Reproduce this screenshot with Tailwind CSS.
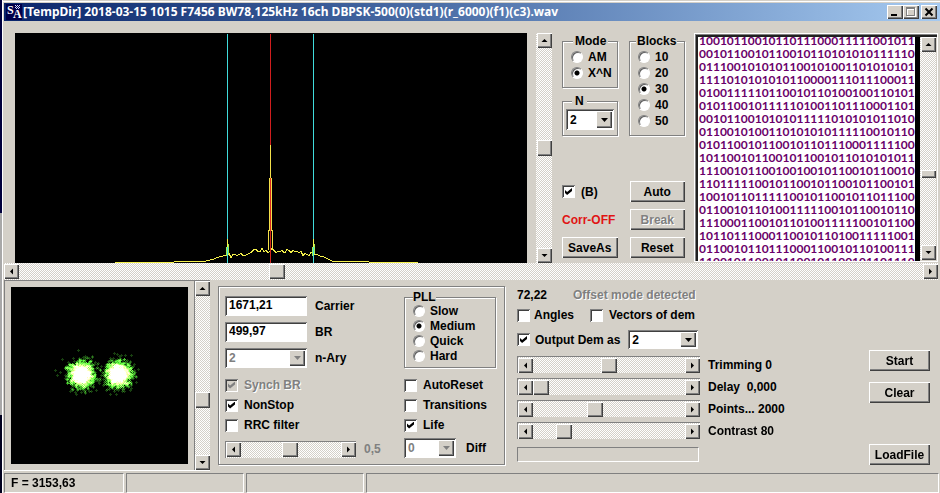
<!DOCTYPE html>
<html lang="en">
<head>
    <meta charset="UTF-8">
    <meta name="viewport" content="width=device-width, initial-scale=1.0">
    <title>Signal Analyzer</title>
    <script src="https://cdn.jsdelivr.net/npm/@tailwindcss/browser@4"></script>
</head>
<body class="flex min-h-screen bg-[#d4d0c8] font-['Liberation_Sans',Arial,sans-serif] text-[12px] leading-4 font-bold text-black">
    <!-- Desktop edge -->
    <div class="w-[2px] shrink-0 flex flex-col">
        <div class="h-[213px] bg-[#00003c]"></div>
        <div class="h-[202px] bg-[#a8a8a8]"></div>
        <div class="flex-1 bg-[#00001e]"></div>
    </div>

    <div class="flex-1 min-w-0 flex flex-col border-l border-white">
        <!-- Title bar -->
        <header class="mt-px border-t border-white pt-px pl-px">
            <div class="flex items-center h-[18px] pl-[2px] pr-[3px] bg-linear-to-r from-[#0a246a] to-[#a6caf0]">
                <svg class="w-4 h-4 shrink-0" viewBox="0 0 16 16">
                    <rect width="16" height="16" fill="#00004a"/>
                    <text x="1" y="10" font-family="Liberation Serif, serif" font-size="12" font-weight="bold" fill="#fff">S</text>
                    <text x="7" y="14" font-family="Liberation Serif, serif" font-size="12" font-weight="bold" fill="#fff">A</text>
                    <path d="M9 1h1M11 1h1M13 1h1M10 2h1M12 2h1M9 3h1M11 3h1M13 3h1M10 4h1M12 4h1" transform="translate(0 .5)" stroke="#cfd6ff"/>
                </svg>
                <h1 class="flex-1 min-w-0 pl-px truncate font-['Noto_Sans','Open_Sans',sans-serif] text-[12px] font-bold text-white">[TempDir] 2018-03-15 1015 F7456 BW78,125kHz 16ch DBPSK-500(0)(std1)(r_6000)(f1)(c3).wav</h1>
                <div class="flex">
                    <button type="button" aria-label="Minimize" class="flex w-4 h-[14px] bg-[#d4d0c8] shadow-[inset_1px_1px_#fff,inset_-1px_-1px_#404040,inset_-2px_-2px_#808080]">
                        <svg class="w-4 h-[14px]" viewBox="0 0 16 14"><path d="M4 9h6v2H4z"/></svg>
                    </button>
                    <button type="button" aria-label="Maximize" disabled class="flex w-4 h-[14px] bg-[#d4d0c8] shadow-[inset_1px_1px_#fff,inset_-1px_-1px_#404040,inset_-2px_-2px_#808080]">
                        <svg class="w-4 h-[14px]" viewBox="0 0 16 14" fill="none" shape-rendering="crispEdges"><path d="M4.5 4.5h8v7h-8zM4 3.5h9" stroke="#fff"/><path d="M3.500 3.500h8v7h-8zM3 2.500h9" stroke="#808080"/></svg>
                    </button>
                    <button type="button" aria-label="Close" class="ml-[2px] flex w-4 h-[14px] bg-[#d4d0c8] shadow-[inset_1px_1px_#fff,inset_-1px_-1px_#404040,inset_-2px_-2px_#808080]">
                        <svg class="w-4 h-[14px]" viewBox="0 0 16 14"><path d="M4.500 3.500l7 7M11.500 3.500l-7 7" stroke="#000" stroke-width="2"/></svg>
                    </button>
                </div>
            </div>
        </header>

        <!-- Spectrum, mode controls and bit stream -->
        <section class="flex pt-3 pl-3 pr-[2px]">
            <svg class="flex-1 min-w-0 h-[230px] bg-black" viewBox="0 0 512 230" preserveAspectRatio="none" fill="none" shape-rendering="crispEdges">
                <path d="M255.500 1V230" stroke="#d01e1e"/>
                <path id="spectrum" stroke="#f4f04a"/>
                <path d="M253.500 217V197h1V145h1V112V145h1V197h1V217" stroke="#f4e04a"/>
                <path d="M255.500 145V230" stroke="#d8281e"/>
                <path d="M212.500 1V230M298.500 1V230" stroke="#40dcdc"/>
                <path d="M212.500 206V214M298.500 206V214" stroke="#f4f04a"/>
                <path d="M211.500 214V223M213.500 211V221M297.500 214V223M299.500 211V221" stroke="#a0f050"/>
            </svg>
            <div data-bar="v" data-id="level" data-label="Level" data-value="50" class="ml-[9px] w-4"></div>

            <div class="ml-[10px] w-[123px] flex flex-col justify-between pb-[5px]">
                <div class="flex gap-[11px]">
                    <div class="w-14 flex flex-col justify-between">
                        <fieldset class="h-[55px] border border-[#808080] shadow-[1px_1px_#fff,inset_1px_1px_#fff] pl-2">
                            <legend class="ml-[2px] px-[2px] bg-[#d4d0c8]">Mode</legend>
                            <label class="flex items-center gap-[5px] h-4"><input type="radio" name="mode">AM</label>
                            <label class="flex items-center gap-[5px] h-4"><input type="radio" name="mode" checked>X^N</label>
                        </fieldset>
                        <fieldset class="h-[43px] border border-[#808080] shadow-[1px_1px_#fff,inset_1px_1px_#fff] px-[3px]">
                            <legend class="ml-[6px] px-[3px] bg-[#d4d0c8]">N</legend>
                            <div data-select class="h-[21px]"><select aria-label="N"><option>2</option><option>4</option></select></div>
                        </fieldset>
                    </div>
                    <fieldset class="w-14 h-[103px] border border-[#808080] shadow-[1px_1px_#fff,inset_1px_1px_#fff] pl-2">
                        <legend class="-ml-[2px] px-px bg-[#d4d0c8]">Blocks</legend>
                        <label class="flex items-center gap-[5px] h-4"><input type="radio" name="blocks">10</label>
                        <label class="flex items-center gap-[5px] h-4"><input type="radio" name="blocks">20</label>
                        <label class="flex items-center gap-[5px] h-4"><input type="radio" name="blocks" checked>30</label>
                        <label class="flex items-center gap-[5px] h-4"><input type="radio" name="blocks">40</label>
                        <label class="flex items-center gap-[5px] h-4"><input type="radio" name="blocks">50</label>
                    </fieldset>
                </div>
                <div class="grid grid-cols-2 gap-x-3 gap-y-[7px] items-center">
                    <label class="flex items-center gap-[6px]"><input type="checkbox" checked>(B)</label>
                    <button type="button" data-btn>Auto</button>
                    <span class="text-[#e01414]">Corr-OFF</span>
                    <button type="button" data-btn disabled>Break</button>
                    <button type="button" data-btn>SaveAs</button>
                    <button type="button" data-btn>Reset</button>
                </div>
            </div>

            <!-- Bit stream -->
            <div class="ml-[9px] w-[244px] h-[229px] flex border border-white p-px shadow-[inset_1px_1px_#808080,inset_3px_3px_#202020]">
                <div class="flex-1 min-w-0 mt-[2px] ml-[2px] pl-px h-[224px] overflow-hidden bg-white border-r-[5px] border-black">
                    <pre class="-mt-[3px] font-[Lato,sans-serif] text-[12px] leading-[13px] font-bold text-[#6a006a]">1001011001011011100011111001011
0010110010110010110101010111110
0111001010101100101001101010101
1111010101010110000111011100011
0100111110110010110100100110101
0101100101111101001101110001101
0010110010101011111010101011010
0110010100110101010111110010110
0101100101100101101110001111100
1011001011001011001011010101011
1110010110010010010110010110010
1101111100101100101100101100101
1001011011111001011001011011100
0110010110100111110010110010110
1110001100101101001111100101100
1011011100011001011010011111001
0110010110111000110010110100111
1100101100101100101100101101110</pre>
                </div>
                <div data-bar="v" data-id="stream" data-label="Bit stream position" data-value="64" data-thumb="small" class="w-4 mt-[2px]"></div>
            </div>
        </section>

        <div data-bar="h" data-id="freq" data-label="Frequency" data-value="28.2" class="h-[17px] ml-px mr-[2px]"></div>

        <!-- Lower panels -->
        <section class="flex pl-px">
            <div class="flex border-t border-[#808080] border-b border-b-white">
                <div class="border-l border-[#808080] p-[6px]">
                    <canvas id="constellation" width="177" height="177" class="block bg-black"></canvas>
                </div>
                <div data-bar="v" data-id="scale" data-label="Scale" data-value="67" class="w-4 border-l border-[#808080]"></div>
            </div>

            <div class="ml-2 mt-[6px] mb-[6px] w-[287px] border border-[#808080] shadow-[1px_1px_#fff,inset_1px_1px_#fff] pl-[6px] pr-2 pt-[2px] grid grid-cols-[179px_1fr] grid-rows-[83px_20px_20px_20px_1fr]">
                <div class="pt-[7px] flex flex-col gap-[6px]">
                    <div class="flex items-center gap-2"><input id="carrier" type="text" data-text value="1671,21"><label for="carrier">Carrier</label></div>
                    <div class="flex items-center gap-2"><input id="br" type="text" data-text value="499,97"><label for="br">BR</label></div>
                    <div class="flex items-center gap-2"><div data-select class="w-[82px] h-5"><select id="nary" disabled><option>2</option></select></div><label for="nary">n-Ary</label></div>
                </div>
                <fieldset class="h-[79px] border border-[#808080] shadow-[1px_1px_#fff,inset_1px_1px_#fff] pl-2">
                    <legend class="ml-0 -mb-[2px] bg-[#d4d0c8]">PLL</legend>
                    <label class="flex items-center gap-[5px] h-[15px]"><input type="radio" name="pll">Slow</label>
                    <label class="flex items-center gap-[5px] h-[15px]"><input type="radio" name="pll" checked>Medium</label>
                    <label class="flex items-center gap-[5px] h-[15px]"><input type="radio" name="pll">Quick</label>
                    <label class="flex items-center gap-[5px] h-[15px]"><input type="radio" name="pll">Hard</label>
                </fieldset>
                <label class="mt-[6px] flex items-center gap-[6px] text-[#808080] [text-shadow:1px_1px_#fff]"><input type="checkbox" checked disabled>Synch BR</label>
                <label class="mt-[6px] flex items-center gap-[6px]"><input type="checkbox">AutoReset</label>
                <label class="mt-[6px] flex items-center gap-[6px]"><input type="checkbox" checked>NonStop</label>
                <label class="mt-[6px] flex items-center gap-[6px]"><input type="checkbox">Transitions</label>
                <label class="mt-[6px] flex items-center gap-[6px]"><input type="checkbox">RRC filter</label>
                <label class="mt-[6px] flex items-center gap-[6px]"><input type="checkbox" checked>Life</label>
                <div class="flex items-center gap-2 pt-[2px]">
                    <div data-bar="h" data-id="rolloff" data-value="49" class="w-[131px] h-[17px] border-t border-l border-[#808080]"></div>
                    <label for="rolloff" class="text-[#808080]">0,5</label>
                </div>
                <div class="flex items-center gap-[10px]">
                    <div data-select class="w-[52px] h-5"><select id="diff" disabled><option>0</option></select></div>
                    <label for="diff">Diff</label>
                </div>
            </div>

            <!-- Demodulator output -->
            <div class="flex-1 min-w-0 ml-3 pt-[7px]">
                <div class="flex h-4"><span class="w-14">72,22</span><span class="text-[#808080] [text-shadow:1px_1px_#fff]">Offset mode detected</span></div>
                <div class="mt-1 flex h-4">
                    <label class="w-[73px] flex items-center gap-1"><input type="checkbox">Angles</label>
                    <label class="flex items-center gap-[6px]"><input type="checkbox">Vectors of dem</label>
                </div>
                <div class="mt-[7px] mb-[7px] flex items-center gap-2">
                    <label class="flex items-center gap-[5px]"><input type="checkbox" checked>Output Dem as</label>
                    <div data-select class="w-[70px] h-[19px]"><select aria-label="Output Dem as"><option>2</option><option>4</option></select></div>
                </div>
                <div class="flex flex-col gap-[5px]">
                    <div class="flex items-center gap-2 h-[17px]"><div data-bar="h" data-id="trimming" data-value="50" class="w-[183px] h-[17px] border-t border-l border-[#808080]"></div><label for="trimming">Trimming 0</label></div>
                    <div class="flex items-center gap-2 h-[17px]"><div data-bar="h" data-id="delay" data-value="0" class="w-[183px] h-[17px] border-t border-l border-[#808080]"></div><label for="delay" class="whitespace-pre">Delay  0,000</label></div>
                    <div class="flex items-center gap-2 h-[17px]"><div data-bar="h" data-id="points" data-value="40" class="w-[183px] h-[17px] border-t border-l border-[#808080]"></div><label for="points">Points... 2000</label></div>
                    <div class="flex items-center gap-2 h-[17px]"><div data-bar="h" data-id="contrast" data-value="17" class="w-[183px] h-[17px] border-t border-l border-[#808080]"></div><label for="contrast">Contrast 80</label></div>
                </div>
                <div role="progressbar" aria-label="Progress" class="mt-2 w-[182px] h-[15px] border border-[#808080] border-b-white border-r-white"></div>
            </div>
            <div class="w-[61px] mr-[10px] pt-[70px] pb-[6px] flex flex-col">
                <button type="button" data-btn>Start</button>
                <button type="button" data-btn class="mt-[11px]">Clear</button>
                <button type="button" data-btn class="mt-auto">LoadFile</button>
            </div>
        </section>

        <!-- Status bar -->
        <footer class="mt-[2px] mb-px ml-px mr-px h-5 flex gap-[2px]">
            <div class="w-[120px] pl-[6px] border border-[#808080] border-b-white border-r-white leading-[18px]">F = 3153,63</div>
            <div class="w-[118px] border border-[#808080] border-b-white border-r-white"></div>
            <div class="w-[118px] border border-[#808080] border-b-white border-r-white"></div>
            <div class="flex-1 border border-[#808080] border-b-white border-r-white"></div>
        </footer>
    </div>

    <script>
        // Shared look of the classic controls
        document.querySelectorAll('[data-btn]').forEach(el => {
            el.className += ' h-[21px] w-full text-center bg-[#d4d0c8] shadow-[inset_1px_1px_#fff,inset_-1px_-1px_#404040,inset_-2px_-2px_#808080] disabled:text-[#808080] disabled:[text-shadow:1px_1px_#fff]';
        });
        document.querySelectorAll('input[type=radio]').forEach(el => {
            el.className = 'appearance-none shrink-0 w-3 h-3 rounded-full bg-white border border-[#808080] border-b-white border-r-white shadow-[inset_1px_1px_#606060] checked:bg-[radial-gradient(circle,#000_0_2px,#fff_3px)]';
        });
        document.querySelectorAll('input[type=checkbox]').forEach(el => {
            const tick = el.disabled ? 'checked:before:bg-[#808080]' : 'checked:before:bg-black';
            el.className = `appearance-none shrink-0 flex w-[13px] h-[13px] p-[3px] bg-white disabled:bg-[#d4d0c8] shadow-[inset_1px_1px_#808080,inset_-1px_-1px_#fff,inset_2px_2px_#404040] before:content-[''] before:w-[7px] before:h-[7px] ${tick} before:[clip-path:polygon(0_28%,30%_58%,100%_0,100%_42%,30%_100%,0_72%)]`;
        });
        document.querySelectorAll('[data-text]').forEach(el => {
            el.className = 'w-[82px] h-5 pl-1 pb-[2px] bg-white outline-none shadow-[inset_1px_1px_#808080,inset_-1px_-1px_#fff,inset_2px_2px_#404040]';
        });
        document.querySelectorAll('[data-select]').forEach(el => {
            const select = el.querySelector('select');
            el.className += ' flex bg-white p-[2px] shadow-[inset_1px_1px_#808080,inset_-1px_-1px_#fff,inset_2px_2px_#404040]';
            select.className = 'appearance-none flex-1 min-w-0 pl-[2px] outline-none disabled:text-[#808080] disabled:opacity-100';
            el.insertAdjacentHTML('beforeend', `
                <span class="w-4 shrink-0 flex items-center justify-center bg-[#d4d0c8] shadow-[inset_1px_1px_#fff,inset_-1px_-1px_#404040,inset_-2px_-2px_#808080] pointer-events-none">
                    <svg class="w-[7px] h-1" viewBox="0 0 7 4"><path d="M0 0h7L3.500 4z" fill="${select.disabled ? '#808080' : '#000'}"/></svg>
                </span>`);
        });

        // Scroll bars: arrow, range input, arrow
        const arrows = { up: 'M4 6L8 2l4 4z', down: 'M4 2h8L8 6z', left: 'M2 4l4-4v8z', right: 'M2 0l4 4-4 4z' };
        function arrow(dir) {
            const box = dir === 'up' || dir === 'down' ? '2 -2 12 12' : '-2 -2 12 12';
            return `<button type="button" aria-label="${dir}" class="w-[15px] h-[15px] shrink-0 flex items-center justify-center bg-[#d4d0c8] shadow-[inset_1px_1px_#fff,inset_-1px_-1px_#404040,inset_-2px_-2px_#808080]">
                <svg class="w-[9px] h-[9px]" viewBox="${box}"><path d="${arrows[dir]}"/></svg></button>`;
        }
        document.querySelectorAll('[data-bar]').forEach(el => {
            const { bar, id, value, label, thumb } = el.dataset;
            const name = label ? `aria-label="${label}"` : '';
            el.className += ' shrink-0 bg-[repeating-conic-gradient(#fff_0_25%,#d4d0c8_0_50%)] bg-[length:2px_2px]';
            if (bar === 'h') {
                el.className += ' flex items-center';
                el.innerHTML = arrow('left') + `<input type="range" id="${id}" ${name} step="any" value="${value}" class="appearance-none flex-1 min-w-0 h-[15px] bg-transparent outline-none [&::-webkit-slider-thumb]:appearance-none [&::-webkit-slider-thumb]:w-4 [&::-webkit-slider-thumb]:h-[15px] [&::-webkit-slider-thumb]:bg-[#d4d0c8] [&::-webkit-slider-thumb]:shadow-[inset_1px_1px_#fff,inset_-1px_-1px_#404040,inset_-2px_-2px_#808080]">` + arrow('right');
            } else {
                const size = thumb === 'small' ? '[&::-webkit-slider-thumb]:h-2' : '[&::-webkit-slider-thumb]:h-4';
                el.className += ' flex flex-col items-center';
                el.innerHTML = arrow('up') + `<input type="range" id="${id}" ${name} step="any" value="${value}" class="appearance-none [writing-mode:vertical-lr] flex-1 min-h-0 w-[15px] bg-transparent outline-none [&::-webkit-slider-thumb]:appearance-none [&::-webkit-slider-thumb]:w-[15px] ${size} [&::-webkit-slider-thumb]:bg-[#d4d0c8] [&::-webkit-slider-thumb]:shadow-[inset_1px_1px_#fff,inset_-1px_-1px_#404040,inset_-2px_-2px_#808080]">` + arrow('down');
            }
        });

        let seed = 7;
        function rnd() {
            seed = (seed * 16807) % 2147483647;
            return seed / 2147483647;
        }

        // Noise floor of the spectrum
        const floor = [[100, 229], [158, 229], [160, 228], [190, 228], [203, 224], [210, 222], [232, 221], [237, 217], [270, 217], [290, 220], [302, 221], [310, 224], [318, 228], [340, 228], [353, 228], [355, 229], [405, 229]];
        let d = '';
        for (let i = 0; i < floor.length - 1; i++) {
            const [x1, y1] = floor[i], [x2, y2] = floor[i + 1];
            for (let x = x1; x < x2; x += 2) {
                const noise = x > 212 && x < 300 ? Math.round(rnd() * 4 - 2) : 0;
                const y = Math.round(y1 + (y2 - y1) * (x - x1) / (x2 - x1)) + noise;
                d += (d ? 'L' : 'M') + x + ' ' + (y + 0.5);
            }
        }
        document.getElementById('spectrum').setAttribute('d', d);

        // Constellation: brightness adds up where the points pile up
        const ctx = document.getElementById('constellation').getContext('2d');
        ctx.globalCompositeOperation = 'lighter';
        ctx.fillStyle = 'rgb(24, 64, 16)';
        [[70, 87], [107, 87]].forEach(([cx, cy]) => {
            for (let i = 0; i < 1800; i++) {
                const r = 6 * Math.sqrt(-2 * Math.log(rnd()));
                const a = rnd() * Math.PI * 2;
                const x = Math.round(cx + r * Math.cos(a)), y = Math.round(cy + r * Math.sin(a));
                ctx.fillRect(x - 1, y, 3, 1);
                ctx.fillRect(x, y - 1, 1, 1);
                ctx.fillRect(x, y + 1, 1, 1);
            }
        });
    </script>
</body>
</html>
